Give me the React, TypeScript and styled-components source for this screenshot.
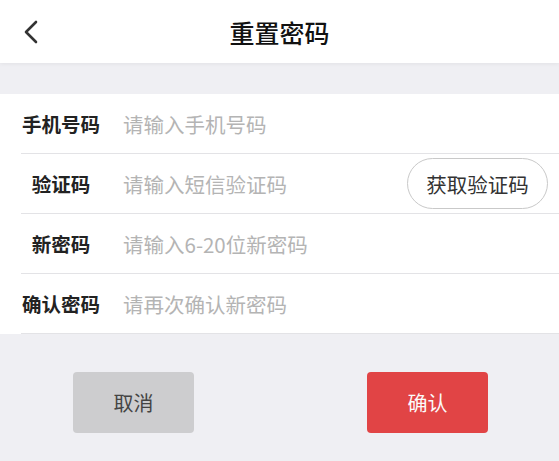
import React from "react";
import styled, { createGlobalStyle } from "styled-components";

const Global = createGlobalStyle`
  html, body { margin: 0; padding: 0; background: #efeff3; }
  body { font-family: "Noto Sans CJK SC", "Noto Sans", sans-serif; }
  * { box-sizing: border-box; }
`;

const Page = styled.div`
  width: 559px;
  height: 461px;
  background: #efeff3;
  display: flex;
  flex-direction: column;
  overflow: hidden;
`;

const Header = styled.header`
  height: 63px;
  background: #ffffff;
  display: grid;
  grid-template-columns: 60px 1fr 60px;
  align-items: center;
  box-shadow: 0 1px 4px rgba(0, 0, 0, 0.06);
  position: relative;
  z-index: 1;
`;

const BackButton = styled.button`
  border: none;
  background: none;
  padding: 0 0 0 23px;
  height: 100%;
  display: flex;
  align-items: center;
  cursor: pointer;
`;

const Title = styled.h1`
  margin: 0;
  text-align: center;
  font-size: 25px;
  font-weight: 500;
  color: #111;
  line-height: 1;
  padding-top: 1px;
`;

const Form = styled.div`
  margin-top: 31px;
  background: #ffffff;
  display: flex;
  flex-direction: column;
`;

const Row = styled.div`
  height: 60px;
  display: flex;
  align-items: center;
  margin-left: 21px;
  border-bottom: 1px solid #e3e3e6;
`;

const Label = styled.label`
  width: 80px;
  flex: none;
  white-space: nowrap;
  text-align: center;
  font-size: 19.5px;
  font-weight: 700;
  color: #222;
`;

const Input = styled.input`
  flex: 1;
  min-width: 0;
  margin-left: 22px;
  border: none;
  outline: none;
  background: transparent;
  font-family: "Noto Sans CJK SC", "Noto Sans", sans-serif;
  font-size: 20.5px;
  color: #333;
  padding: 0;
  &::placeholder { color: #b4b4b4; }
`;

const CodeButton = styled.button`
  flex: none;
  width: 141px;
  height: 51px;
  margin-right: 11px;
  border: 1px solid #c9c9c9;
  border-radius: 26px;
  background: #fff;
  font-family: "Noto Sans CJK SC", "Noto Sans", sans-serif;
  font-size: 20.5px;
  color: #333;
  padding: 0;
`;

const Actions = styled.div`
  margin-top: 38px;
  display: flex;
  justify-content: space-between;
  padding: 0 71px 0 73px;
`;

const ActionButton = styled.button<{ $primary?: boolean }>`
  width: 121px;
  height: 61px;
  border: none;
  border-radius: 4px;
  background: ${(p) => (p.$primary ? "#e14445" : "#cdcdcf")};
  color: ${(p) => (p.$primary ? "#fbfbfb" : "#444")};
  font-family: "Noto Sans CJK SC", "Noto Sans", sans-serif;
  font-size: 20px;
  padding: 0;
`;

const fields = [
  { label: "手机号码", placeholder: "请输入手机号码" },
  { label: "验证码", placeholder: "请输入短信验证码", code: true },
  { label: "新密码", placeholder: "请输入6-20位新密码" },
  { label: "确认密码", placeholder: "请再次确认新密码" },
];

export default function App() {
  return (
    <>
      <Global />
      <Page>
        <Header>
          <BackButton aria-label="返回">
            <svg width="16" height="24" viewBox="0 0 16 24">
              <path d="M13 2 L3 12 L13 22" fill="none" stroke="#333" strokeWidth="2.6" strokeLinecap="round" strokeLinejoin="round" />
            </svg>
          </BackButton>
          <Title>重置密码</Title>
          <span />
        </Header>
        <Form>
          {fields.map((f) => (
            <Row key={f.label}>
              <Label>{f.label}</Label>
              <Input placeholder={f.placeholder} />
              {f.code && <CodeButton>获取验证码</CodeButton>}
            </Row>
          ))}
        </Form>
        <Actions>
          <ActionButton>取消</ActionButton>
          <ActionButton $primary>确认</ActionButton>
        </Actions>
      </Page>
    </>
  );
}
